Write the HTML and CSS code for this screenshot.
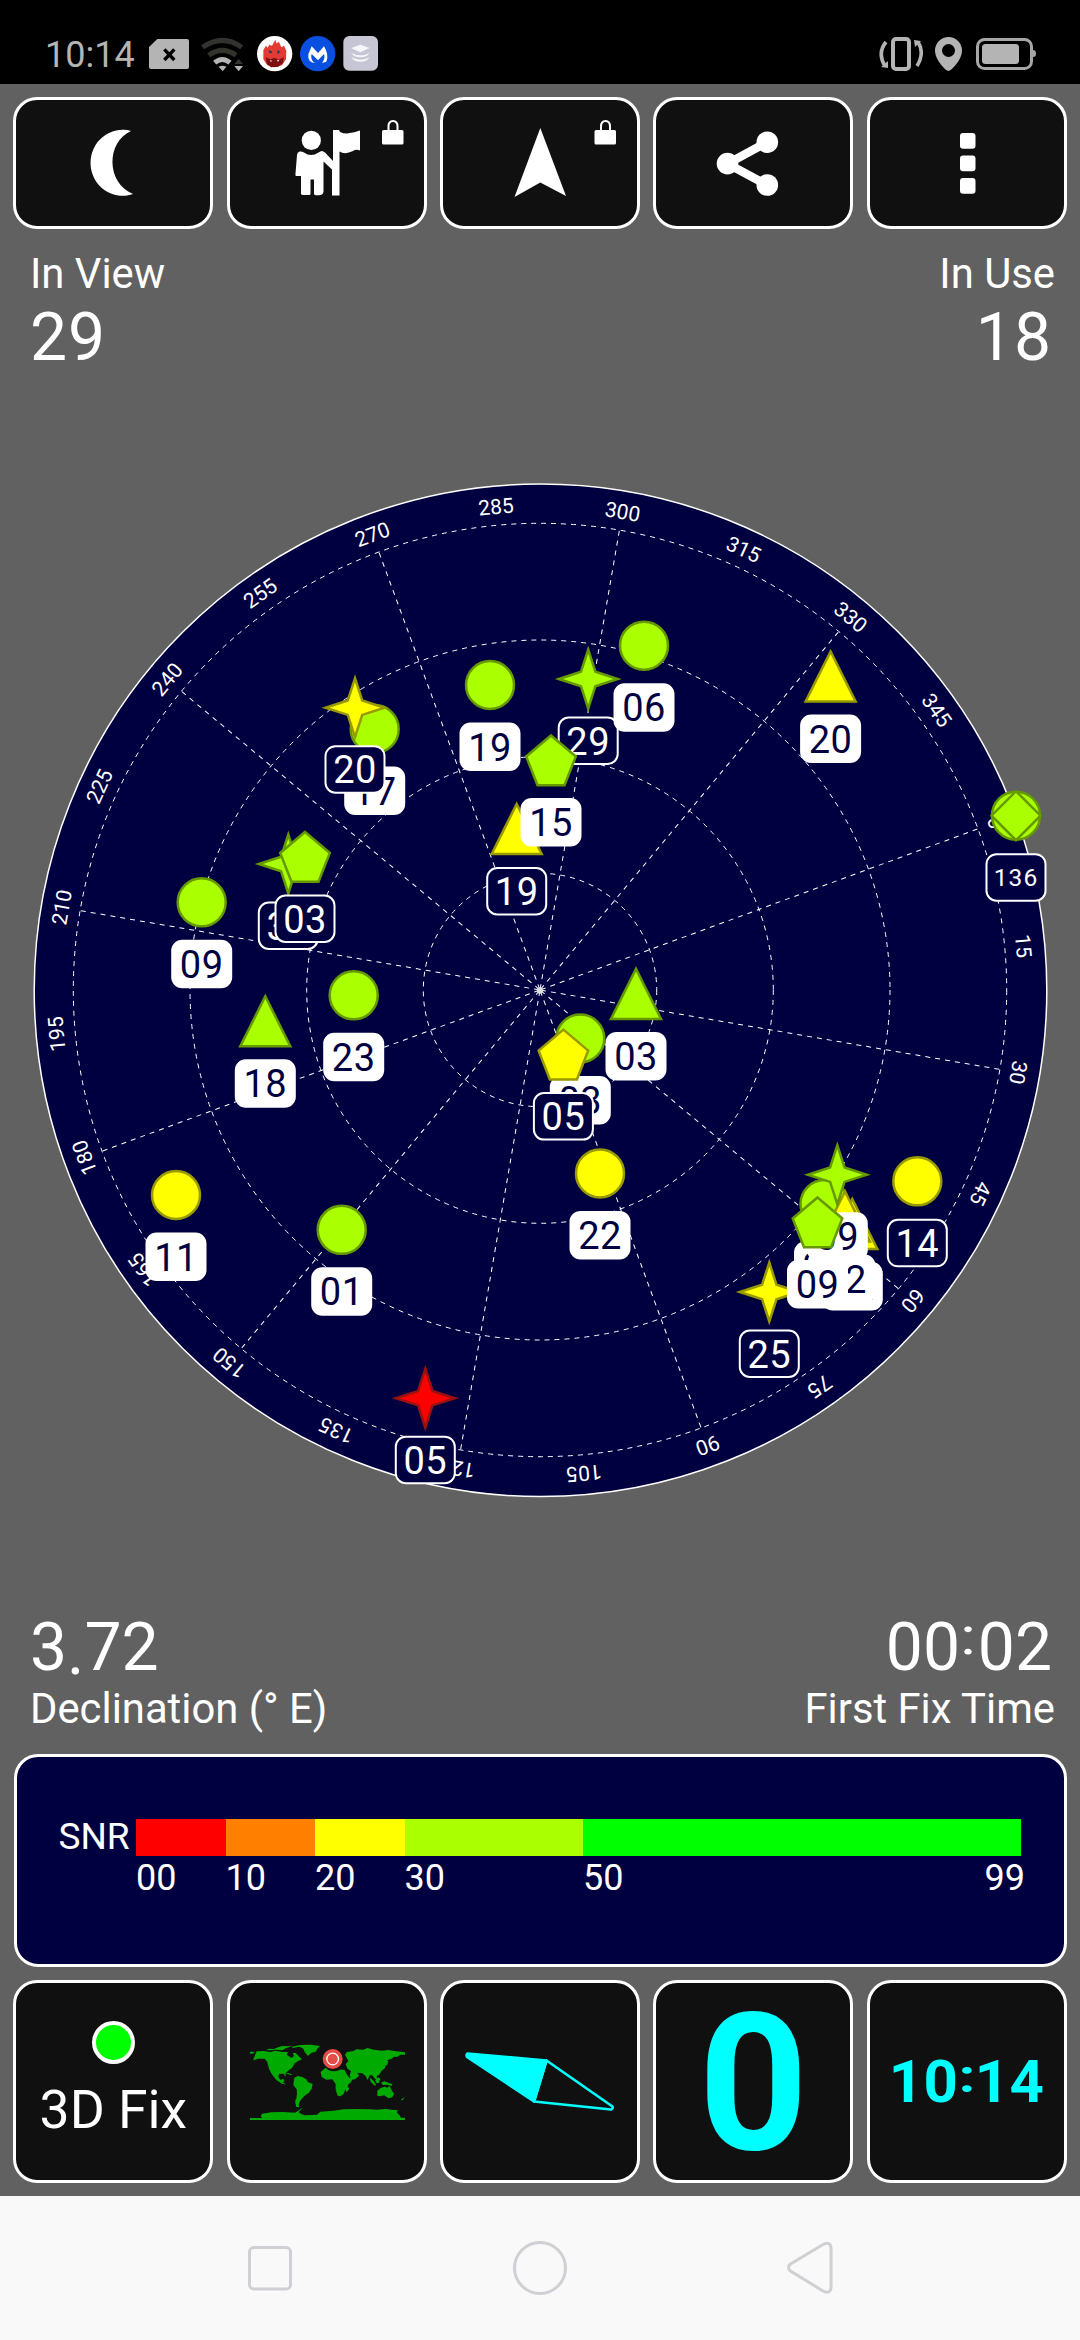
FILE: index.html
```html
<!DOCTYPE html>
<html lang="en">
<head>
<meta charset="utf-8">
<title>GPS Status</title>
<link rel="stylesheet" href="styles.css">
</head>
<body>
<header class="status">
  <div class="status-left">
    <span class="clock">10:14</span>
    <svg class="sim" width="40" height="50" viewBox="27 0 120 150"><path fill="#b4b4b4" d="M52 27h89q6 0 6 6v78q0 6-6 6H33q-6 0-6-6V51z"/><path stroke="#000" stroke-width="10" d="M73 58l30 32M103 58l-30 32"/></svg>
    <svg class="wifi" width="42" height="50" viewBox="183 0 126 150"><g fill="none" stroke-width="15"><path stroke="#33332e" d="M188 52Q247 10 305 52M206 76Q247 46 288 76"/><path stroke="#b4b4b4" d="M224 98Q247 79 270 98"/></g><path fill="#b4b4b4" d="M236 110q12-6 23 0l-11 14zM283 108h26l-13 16z"/><path fill="#33332e" d="M283 102h26l-13-16z"/></svg>
    <svg class="ant" width="36" height="50" viewBox="350 0 108 150"><ellipse cx="403" cy="71" rx="53" ry="53" fill="#fff"/><path fill="#e23b34" d="M369 60l8-13 5 6 5-9 8 3 10-18 3 11 8-4 7 16 8-5 7 15-1 26-12 18-22 6-22-6-12-18z"/><path fill="#7d1010" d="M376 82l14 6 12-5 14 6 14-8-2 17-14 12-22 2-12-10z"/><path fill="#333a66" d="M385 61l10 3v5l-8 1zM412 61l8 3-6 8-4-3z"/><path fill="#fff" d="M388 90l8 3-5 2zM411 89l6 2-5 5z"/></svg>
    <svg class="mwb" width="36" height="50" viewBox="479 0 108 150"><circle cx="532" cy="71" r="53" fill="#0a50e0"/><path fill="#fff" d="M514 49l19 20 18-20q16 26 7 46-7 3-13 3 11-12 6-26l-18 19-19-19q-5 13 6 25l8 2q-28 0-24-26z"/></svg>
    <svg class="stack" width="36" height="50" viewBox="608 0 108 150"><rect x="609" y="18" width="104" height="104" rx="18" fill="#c5c5d4"/><g fill="#f6f6fb"><path d="M632 54l28-10 28 10-28 13zM632 68q28 16 57 0l-10 10q-19 8-38 0zM632 81q28 16 57 0l-10 10q-19 9-38 0z"/></g></svg>
  </div>
  <div class="status-right">
    <svg width="44" height="50" viewBox="880 30 44 50" fill="none" stroke="#b4b4b4"><rect x="894" y="39" width="16" height="30" rx="3" stroke-width="4"/><path stroke-width="3.6" d="M887 42q-9 11-1 24M918 66q8-13 1-24"/><path fill="#b4b4b4" stroke="none" d="M882 67l7-6v7zM915 40l7 1-6 6z"/></svg>
    <svg width="28" height="50" viewBox="936 30 28 50"><path fill="#b4b4b4" fill-rule="evenodd" d="M949.500 37a13.500 13.500 0 0 1 13.500 13.500C963 60 952 71 949.500 71S936 60 936 50.500A13.500 13.500 0 0 1 949.500 37zm0 7a6.500 6.500 0 1 0 0 13 6.500 6.500 0 0 0 0-13z"/></svg>
    <svg width="62" height="50" viewBox="974 30 62 50"><rect x="976.500" y="39.500" width="54" height="29" rx="7" fill="none" stroke="#a6a6a6" stroke-width="3"/><rect x="981" y="44" width="37" height="20" rx="3.500" fill="#b4b4b4"/><path fill="#a6a6a6" d="M1032 50q3 0 3 3.500t-3 3.500z"/></svg>
  </div>
</header>

<main class="app">
  <nav class="buttons tools">
    <button class="tile"><svg viewBox="17 101 192 124"><path fill="#fff" d="M131 131A32 33 0 1 0 133 194C106 183 106 142 131 131z"/></svg></button>
    <button class="tile"><svg viewBox="230 101 192 124" fill="#fff"><ellipse cx="310.300" cy="140.400" rx="9.600" ry="9.600"/><path d="M298.500 151.500q2-.5 4.500 1 7 5 14.500 0l3-1.500q2 0 3.500 1.500l8 8.500v-31h6l1 2q3 1.500 7 1.500 8-1 13-3v20q-4-1.500-7 .5-8 4-13.500.5v44H331v-26l-8.500-8v30q-.5 4-5 3.700-5 .3-4.500-1.700v-14h-3.500v14q.5 2-4.500 1.500-5 .5-5-1.500V176h-5q-1-.5-.5-2.500l1.500-18.500q.2-3 2.500-3.500z"/><rect x="381" y="130" width="21.500" height="14.500" rx="1.500"/><path fill="none" stroke="#fff" stroke-width="2" d="M387.500 131v-4.500q0-5.500 4.500-5.500t4.500 5.500v4.500"/></svg></button>
    <button class="tile"><svg viewBox="444 101 192 124" fill="#fff"><path d="M540.300 128L566 196l-25.700-13.500L514.500 197z"/><rect x="594.500" y="130" width="21.500" height="14.500" rx="1.500"/><path fill="none" stroke="#fff" stroke-width="2" d="M601 131v-4.500q0-5.500 4.500-5.500t4.500 5.500v4.500"/></svg></button>
    <button class="tile"><svg viewBox="657 101 192 124" fill="#fff"><path fill="none" stroke="#fff" stroke-width="8.500" d="M767.300 142L727.500 163.700l39.800 21.500"/><circle cx="727.500" cy="163.600" r="10.800"/><circle cx="767.300" cy="142.200" r="10.800"/><circle cx="767.300" cy="185" r="10.800"/></svg></button>
    <button class="tile"><svg viewBox="870 101 192 124" fill="#fff"><rect x="959" y="133" width="15.500" height="15.700" rx="3"/><rect x="959" y="155.500" width="15.500" height="15.700" rx="3"/><rect x="959" y="178" width="15.500" height="15.700" rx="3"/></svg></button>
  </nav>

  <section class="stats stats-top">
    <div class="stat"><div class="label">In View</div><div class="value">29</div></div>
    <div class="stat end"><div class="label">In Use</div><div class="value">18</div></div>
  </section>

  <svg class="sky" width="1080" height="1220" viewBox="0 380 1080 1220">
    <defs>
      <circle id="gps" r="24"/>
      <path id="star" d="M0-29.500L7.200-7.200 29.500 0 7.200 7.200 0 29.500-7.200 7.200-29.500 0-7.200-7.200z"/>
      <path id="tri" d="M0-25.500L25 24.500H-25z"/>
      <path id="pent" d="M0-25L24.800-4 13.500 24.800H-13.500L-24.800-4z"/>
      <path id="line" d="M540 989V523.500"/>
      <rect id="tag" x="-29.500" y="38.500" width="59" height="46.500" rx="10"/>
    </defs>
    <circle class="disc" cx="540.500" cy="990.300" r="506.300"/>
    <g class="grid">
      <circle cx="540" cy="990" r="116.700"/><circle cx="540" cy="990" r="233.300"/><circle cx="540" cy="990" r="350"/><circle cx="540" cy="990" r="466.700"/>
      <g transform="rotate(9.800 540 990)">
        <use href="#line"/><use href="#line" transform="rotate(30 540 990)"/><use href="#line" transform="rotate(60 540 990)"/><use href="#line" transform="rotate(90 540 990)"/><use href="#line" transform="rotate(120 540 990)"/><use href="#line" transform="rotate(150 540 990)"/><use href="#line" transform="rotate(180 540 990)"/><use href="#line" transform="rotate(210 540 990)"/><use href="#line" transform="rotate(240 540 990)"/><use href="#line" transform="rotate(270 540 990)"/><use href="#line" transform="rotate(300 540 990)"/><use href="#line" transform="rotate(330 540 990)"/>
      </g>
    </g>
    <circle class="hub" cx="540" cy="990.500" r="3.200"/>
    <g class="degrees">
      <text x="540" y="512" transform="rotate(69.800 540 990)">0</text>
      <text x="540" y="512" transform="rotate(84.800 540 990)">15</text>
      <text x="540" y="512" transform="rotate(99.800 540 990)">30</text>
      <text x="540" y="512" transform="rotate(114.800 540 990)">45</text>
      <text x="540" y="512" transform="rotate(129.800 540 990)">60</text>
      <text x="540" y="512" transform="rotate(144.800 540 990)">75</text>
      <text x="540" y="512" transform="rotate(159.800 540 990)">90</text>
      <text x="540" y="512" transform="rotate(174.800 540 990)">105</text>
      <text x="540" y="512" transform="rotate(189.800 540 990)">120</text>
      <text x="540" y="512" transform="rotate(204.800 540 990)">135</text>
      <text x="540" y="512" transform="rotate(219.800 540 990)">150</text>
      <text x="540" y="512" transform="rotate(234.800 540 990)">165</text>
      <text x="540" y="512" transform="rotate(249.800 540 990)">180</text>
      <text x="540" y="512" transform="rotate(264.800 540 990)">195</text>
      <text x="540" y="512" transform="rotate(279.800 540 990)">210</text>
      <text x="540" y="512" transform="rotate(294.800 540 990)">225</text>
      <text x="540" y="512" transform="rotate(309.800 540 990)">240</text>
      <text x="540" y="512" transform="rotate(324.800 540 990)">255</text>
      <text x="540" y="512" transform="rotate(339.800 540 990)">270</text>
      <text x="540" y="512" transform="rotate(354.800 540 990)">285</text>
      <text x="540" y="512" transform="rotate(9.800 540 990)">300</text>
      <text x="540" y="512" transform="rotate(24.800 540 990)">315</text>
      <text x="540" y="512" transform="rotate(39.800 540 990)">330</text>
      <text x="540" y="512" transform="rotate(54.800 540 990)">345</text>
    </g>
    <g class="sats">
      <g class="used" transform="translate(490 685)"><use class="good" href="#gps"/><use class="tag" href="#tag"/><text y="75.500">19</text></g>
      <g class="used" transform="translate(374.700 729)"><use class="good" href="#gps"/><use class="tag" href="#tag"/><text y="75.500">17</text></g>
      <g class="seen" transform="translate(355 707.700)"><use class="fair" href="#star"/><use class="tag" href="#tag"/><text y="75.500">20</text></g>
      <g class="seen" transform="translate(288.300 864)"><use class="good" href="#star"/><use class="tag" href="#tag"/><text y="75.500">30</text></g>
      <g class="seen" transform="translate(305 857)"><use class="good" href="#pent"/><use class="tag" href="#tag"/><text y="75.500">03</text></g>
      <g class="used" transform="translate(201.700 902.300)"><use class="good" href="#gps"/><use class="tag" href="#tag"/><text y="75.500">09</text></g>
      <g class="seen" transform="translate(588.200 679)"><use class="good" href="#star"/><use class="tag" href="#tag"/><text y="75.500">29</text></g>
      <g class="used" transform="translate(644 645.700)"><use class="good" href="#gps"/><use class="tag" href="#tag"/><text y="75.500">06</text></g>
      <g class="seen" transform="translate(516.700 829.500)"><use class="fair" href="#tri"/><use class="tag" href="#tag"/><text y="75.500">19</text></g>
      <g class="used" transform="translate(551 760.500)"><use class="good" href="#pent"/><use class="tag" href="#tag"/><text y="75.500">15</text></g>
      <g class="used" transform="translate(830.600 677)"><use class="fair" href="#tri"/><use class="tag" href="#tag"/><text y="75.500">20</text></g>
      <g class="seen" transform="translate(1016 815.700)"><use class="good" href="#gps"/><path class="good" d="M0-24.500L24.500 0 0 24.500-24.500 0z"/><use class="tag" href="#tag"/><text class="small" y="70.500">136</text></g>
      <g class="used" transform="translate(353.700 995.300)"><use class="good" href="#gps"/><use class="tag" href="#tag"/><text y="75.500">23</text></g>
      <g class="used" transform="translate(265.300 1021.800)"><use class="good" href="#tri"/><use class="tag" href="#tag"/><text y="75.500">18</text></g>
      <g class="used" transform="translate(176 1195)"><use class="fair" href="#gps"/><use class="tag" href="#tag"/><text y="75.500">11</text></g>
      <g class="used" transform="translate(341.700 1229.800)"><use class="good" href="#gps"/><use class="tag" href="#tag"/><text y="75.500">01</text></g>
      <g class="seen" transform="translate(425.300 1398.200)"><use class="poor" href="#star"/><use class="tag" href="#tag"/><text y="75.500">05</text></g>
      <g class="used" transform="translate(580.300 1038.500)"><use class="good" href="#gps"/><use class="tag" href="#tag"/><text y="75.500">03</text></g>
      <g class="used" transform="translate(636 994.400)"><use class="good" href="#tri"/><use class="tag" href="#tag"/><text y="75.500">03</text></g>
      <g class="seen" transform="translate(563.400 1054.600)"><use class="fair" href="#pent"/><use class="tag" href="#tag"/><text y="75.500">05</text></g>
      <g class="used" transform="translate(600 1173.400)"><use class="fair" href="#gps"/><use class="tag" href="#tag"/><text y="75.500">22</text></g>
      <g class="seen" transform="translate(917.300 1181.300)"><use class="fair" href="#gps"/><use class="tag" href="#tag"/><text y="75.500">14</text></g>
      <g class="seen" transform="translate(769.300 1292)"><use class="fair" href="#star"/><use class="tag" href="#tag"/><text y="75.500">25</text></g>
      <g class="used" transform="translate(852.300 1224.500)"><use class="fair" href="#tri"/><use class="tag" href="#tag"/><text y="75.500">12</text></g>
      <g class="used" transform="translate(824.500 1204)"><use class="good" href="#gps"/><use class="tag" href="#tag"/><text y="75.500">21</text></g>
      <g class="used" transform="translate(845 1217)"><use class="fair" href="#tri"/><use class="tag" href="#tag"/><text y="75.500">02</text></g>
      <g class="used" transform="translate(837.300 1174.700)"><use class="good" href="#star"/><use class="tag" href="#tag"/><text y="75.500">09</text></g>
      <g class="used" transform="translate(817.500 1222.500)"><use class="good" href="#pent"/><use class="tag" href="#tag"/><text y="75.500">09</text></g>
    </g>
  </svg>

  <section class="stats stats-bottom">
    <div class="stat"><div class="value">3<span class="dot">.</span>72</div><div class="label">Declination (° E)</div></div>
    <div class="stat end"><div class="value">00<span class="colon">:</span>02</div><div class="label">First Fix Time</div></div>
  </section>

  <section class="snr">
    <span class="snr-name">SNR</span>
    <div class="scale">
      <div class="step s0"><i></i><b>00</b></div>
      <div class="step s10"><i></i><b>10</b></div>
      <div class="step s20"><i></i><b>20</b></div>
      <div class="step s30"><i></i><b>30</b></div>
      <div class="step s50"><i></i><b>50</b><b>99</b></div>
    </div>
  </section>

  <section class="buttons gauges">
    <div class="tile fix"><span class="lamp"></span><span class="fix-text">3D Fix</span></div>
    <div class="tile">
      <svg viewBox="230 1984 192 195">
        <g transform="translate(240 2036) scale(.3333)">
          <path fill="#00aa00" d="M27 47h10l4 4-14 3zM47 46l20-1 22 3 14-4 20 4 18 0-4 8 14 10 8-6-4-10 10 2 10 10 8 8-10 4-12 8-8 14-14 10-5 6-1 10-5-9h-14l-2 10 6 8 10-2 2 6-5 5 11 5-12-1-18-12-14-18-8-16-5-20-8-10-19 0-16 5zM75 42l10-4 14 1 12-5 14-4 27 1-18 6-9 6-20-2-16 2zM153 32l24-5 34-1 26 4-7 7-6 10-14 4-9 9-10-12-4-10-12-6-20 4zM132 110l10 1 12 5-4 2zM160 125l10-5 14 3 12 7 4 8 15 6-3 14-9 13-13 9-8 9-6 8-3 9 2 8-10-2-1-12 4-26-1-14-10-13zM163 191l8 0-3 16-5-4zM239 108l14-12 16-3 8 5 14 2 20 2 6 12 8 11 10 0-4 12-10 9-1 12-8 4-4 12-10 7-8-2-6-17 0-18-10-14-18 1-14-8zM316 158l7-4 1 6-6 8-4-3zM312 56l6-8 20-3 8-5 20 1 14-5 18 5 24 3 20-2 18 3 32 4v7l-14 0-8 6-10 0-8 6-12 4-4 10-4 14-10 8-8 13-8 2 4 12-8-3-8-10-8 0-6 14-6-12-10-8-15-2 5 10-12 10-9 1-7-12 4-14-10-6-6-14 8-10zM386 125l10 8 10 14-5 2-12-12zM403 132l10-8 5 4-5 14-8-2zM398 112l6-2 5 9-4 8zM409 164l10-8 12-4 8 3 7-5 6 12 7 12-5 10-12 3-12-9-15 3-6-2zM420 140l10-4 12 4 13 5-4 5-12-4-13 1zM435 76l7-2-3 12-13 7zM482 190l8-7-4 9-7 1zM27 246h37l-5-5 4-8 28-4 34-1 38 2 8-6 8-5 7-3-14 12 10 7 10 3 36-2 10-9 40-3 30-4 34-1 45 1 20 1 28-2 24 3 11 0-2 8 8 8 4 7h12v7H27z"/>
          <circle cx="279" cy="72" r="34" fill="#101010"/><circle cx="275" cy="69" r="30" fill="#e64b46"/><circle cx="275" cy="69" r="17.500" fill="none" stroke="#fff" stroke-width="4"/>
        </g>
      </svg>
    </div>
    <div class="tile"><svg viewBox="444 1984 192 195"><g stroke="#0ff" stroke-width="2.600" stroke-linejoin="round" fill="none"><path fill="#0ff" d="M467.300 2053.500L546.500 2060.500 534 2101.500 467 2057q-1-2 .3-3.500z"/><path d="M546.500 2060.500L612.500 2106.500q1 2-1.500 3L534 2101.500z"/></g></svg></div>
    <div class="tile zero">0</div>
    <div class="tile time">10<span class="colon">:</span>14</div>
  </section>
</main>

<footer class="navbar">
  <svg width="46" height="60" viewBox="247 2238 46 60"><rect x="249.500" y="2247.500" width="41" height="41.500" rx="4.500"/></svg>
  <svg width="56" height="60" viewBox="512 2238 56 60"><circle cx="540" cy="2268" r="25.500"/></svg>
  <svg width="46" height="60" viewBox="787 2238 46 60"><path d="M790.500 2264L823 2244.500q7.500-3.500 8 3.500v39.500q-.5 7-8 3.500L790.500 2271q-4-3.500 0-7z"/></svg>
</footer>
</body>
</html>
```

FILE: styles.css
```css
* { box-sizing: border-box; }
body { margin: 0; width: 1080px; height: 2340px; display: flex; flex-direction: column; background: #616161; font-family: Roboto, sans-serif; color: #fff; overflow: hidden; }
svg { display: block; flex: none; }

.status { height: 84px; background: #000; display: flex; justify-content: space-between; padding: 30px 43.500px 0 45px; }
.status-left, .status-right { display: flex; height: 50px; }
.clock { width: 104px; color: #b4b4b4; font-size: 36px; line-height: 50px; }
.wifi { margin-left: 12px; }
.ant { margin-left: 14px; }
.mwb, .stack { margin-left: 7px; }
.status-right { gap: 12px; }

.app { height: 2112px; display: flex; flex-direction: column; }
.buttons { display: grid; grid-template-columns: repeat(5, 200px); column-gap: 13.300px; padding: 13px 0 0 13.400px; }
.tile { border: 3.500px solid #fff; border-radius: 24px; background: #101010; padding: 0; margin: 0; color: #0ff; display: flex; align-items: center; justify-content: center; font-family: inherit; }
.tools .tile { height: 132px; }
.gauges .tile { height: 203px; }
.tile svg { width: 192px; height: 100%; }

.stats { display: flex; justify-content: space-between; padding: 0 25px 0 30px; }
.stats-top { height: 151px; padding-top: 20px; }
.stats-bottom { height: 154px; padding-top: 13px; }
.stat { display: flex; flex-direction: column; }
.end { align-items: flex-end; }
.label { font-size: 41.800px; line-height: 50px; }
.value { font-size: 66px; line-height: 70px; letter-spacing: 1px; }
.stats-top .value { margin-top: 4px; }
.stats-bottom .value { letter-spacing: 0; }
.stats-bottom .label { margin-top: 1px; }
.end .value { margin-right: 3px; }
.colon { display: inline-block; width: .27em; height: 1em; position: relative; top: -.16em; transform: scaleY(.78); }
.dot { position: relative; top: 4px; }

.disc { fill: #000040; stroke: #fff; stroke-width: 1.500; }
.grid { fill: none; stroke: #fff; stroke-width: 1; stroke-dasharray: 5 5; }
.hub { fill: #ddd; }
.degrees { fill: #fff; font-size: 21px; text-anchor: middle; }
.sats { font-size: 38px; text-anchor: middle; stroke-width: 2.500; }
.sats text { stroke: none; letter-spacing: .5px; }
.sats .small { font-size: 24.500px; letter-spacing: 1px; }
.good { fill: #af0; stroke: #690; }
.fair { fill: #ff0; stroke: #990; }
.poor { fill: #f00; stroke: #911; }
.tag { stroke: #fff; stroke-width: 2; }
.used .tag { fill: #fff; }
.used text { fill: #000040; }
.seen .tag { fill: #000040; }
.seen text { fill: #fff; }

.snr { height: 213px; margin: 0 13.500px; border: 3.500px solid #fff; border-radius: 24px; background: #000040; display: flex; padding: 62px 0 0 42px; }
.snr-name { width: 77.500px; font-size: 37px; line-height: 36px; }
.scale { display: grid; grid-template-columns: 89.500px 89.500px 89.500px 178.500px 438px; }
.step { display: grid; grid-template-columns: auto auto; grid-template-rows: 36.500px 44px; justify-content: space-between; }
.step i { grid-column: 1 / 3; }
.step b { font-size: 36px; font-weight: 400; line-height: 45px; }
.step b + b { margin-right: -4px; }
.s0 i { background: #f00; }
.s10 i { background: #ff8000; }
.s20 i { background: #ff0; }
.s30 i { background: #af0; }
.s50 i { background: #0f0; }

.tile.fix { flex-direction: column; justify-content: flex-start; padding-top: 38px; }
.lamp { width: 43px; height: 43px; border: 4px solid #fff; border-radius: 50%; background: #0f0; }
.fix-text { color: #fff; font-size: 53.500px; line-height: 64px; margin-top: 14px; }
.tile.zero { font-size: 191px; font-weight: 700; line-height: 190px; padding-top: 5px; }
.tile.time { font-size: 60px; font-weight: 700; letter-spacing: .5px; }

.navbar { height: 144px; background: #f9f9f9; display: flex; justify-content: space-between; padding: 42px 247px 0; fill: none; stroke: #cfcfd4; stroke-width: 3; }
```
